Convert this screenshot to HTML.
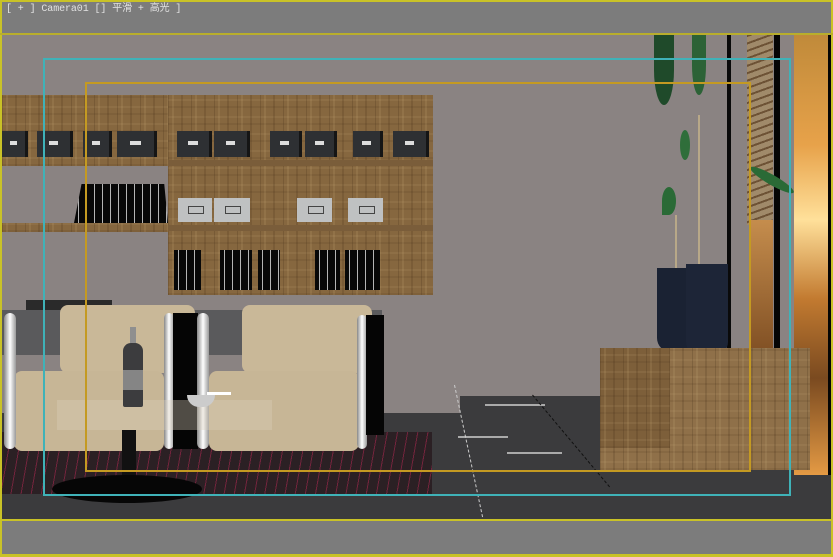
<!DOCTYPE html>
<html><head><meta charset="utf-8"><style>
*{margin:0;padding:0;box-sizing:border-box}
body{width:833px;height:557px;overflow:hidden;background:#7c7c7c;position:relative;font-family:"Liberation Mono","Noto Sans CJK SC",monospace}
div{position:absolute}
.wood{background-color:#86673f;background-image:repeating-linear-gradient(90deg,rgba(60,40,20,.2) 0 1px,transparent 1px 4px,rgba(210,180,130,.14) 4px 6px,transparent 6px 13px,rgba(50,30,10,.15) 13px 15px,transparent 15px 23px),repeating-linear-gradient(0deg,rgba(80,55,30,.15) 0 2px,transparent 2px 7px,rgba(200,170,120,.12) 7px 9px,transparent 9px 17px)}
.bx{background:#2e3033;height:26px;border-right:3px solid #151515}
.bx:after{content:"";position:absolute;left:35%;top:10px;width:30%;height:4px;background:#ddd}
.gb{background:#bfc1c2;height:24px;top:198px}
.gb:after{content:"";position:absolute;left:30%;top:8px;width:40%;height:6px;border:1px solid #444}
.bk{background:#080808;background-image:repeating-linear-gradient(90deg,transparent 0 4px,rgba(255,255,255,.7) 4px 5px,transparent 5px 8px)}
</style></head><body>
<div style="left:0;top:0;width:833px;height:557px;border:2px solid #c9c227;border-bottom:3px solid #c9c227"></div>
<div style="left:6px;top:3px;color:#e2e2e2;font-size:10px;line-height:13px;white-space:pre;letter-spacing:-0.1px">[ + ] Camera01 [] 平滑 + 高光 ]</div>
<div style="left:2px;top:35px;width:829px;height:485px;background:#8a8382;overflow:hidden">
  <div style="left:0;top:378px;width:829px;height:110px;background:#3b3b3d"></div>
  <div style="left:458px;top:361px;width:371px;height:20px;background:#3b3b3d"></div>
  <div style="left:0;top:397px;width:430px;height:62px;background:#2b2024;background-image:repeating-linear-gradient(100deg,transparent 0 9px,rgba(200,40,90,.45) 9px 10px)"></div>
  <div style="left:483px;top:369px;width:60px;height:2px;background:#aaa"></div>
  <div style="left:456px;top:401px;width:50px;height:2px;background:#aaa"></div>
  <div style="left:505px;top:417px;width:55px;height:2px;background:#aaa"></div>
  <div style="left:452px;top:350px;width:1px;height:135px;border-left:1px dashed #ccc;transform:rotate(-12deg);transform-origin:top"></div>
  <div style="left:530px;top:360px;width:1px;height:120px;border-left:1px dashed #111;transform:rotate(-40deg);transform-origin:top"></div>
  <div style="left:792px;top:0;width:37px;height:440px;background:linear-gradient(180deg,#c08a3a,#e7a24a 25%,#ffe09a 42%,#c27a30 60%,#7a4a20 78%,#e49a44)"></div>
  <div style="left:725px;top:0;width:4px;height:320px;background:#0a0a0a"></div>
  <div style="left:745px;top:0;width:26px;height:190px;background:#a08a6a;background-image:repeating-linear-gradient(160deg,#6d5235 0 2px,transparent 2px 7px)"></div>
  <div style="left:749px;top:185px;width:22px;height:145px;background:linear-gradient(180deg,#c58d4d,#7a4a20)"></div>
  <div style="left:772px;top:0;width:6px;height:330px;background:#050505"></div>
  <div style="left:826px;top:0;width:3px;height:440px;background:#050505"></div>
  <div style="left:652px;top:0;width:20px;height:70px;background:#1f4a2a;border-radius:0 0 50% 50%"></div>
  <div style="left:690px;top:0;width:14px;height:60px;background:#2c6236;border-radius:0 0 50% 50%"></div>
  <div style="left:678px;top:95px;width:10px;height:30px;background:#2f6e3a;border-radius:50%"></div>
  <div style="left:660px;top:152px;width:14px;height:28px;background:#2a6a36;border-radius:50% 50% 50% 0"></div>
  <div style="left:745px;top:140px;width:50px;height:10px;background:#2a6a36;border-radius:50%;transform:rotate(30deg)"></div>
  <div style="left:673px;top:180px;width:2px;height:55px;background:#b8a888"></div>
  <div style="left:696px;top:80px;width:2px;height:150px;background:#b8a888"></div>
  <div style="left:655px;top:233px;width:36px;height:84px;background:#1a2233;border-radius:0 0 14px 14px"></div>
  <div style="left:684px;top:229px;width:42px;height:92px;background:#1d2537;border-radius:0 0 14px 14px"></div>
  <div class="wood" style="left:598px;top:313px;width:210px;height:122px;background-color:#8f7049"></div>
  <div class="wood" style="left:598px;top:313px;width:70px;height:100px;background-color:#7d5f3a"></div>
  <div class="wood" style="left:0;top:60px;width:431px;height:71px"></div>
  <div class="wood" style="left:166px;top:60px;width:265px;height:200px"></div>
  <div class="wood" style="left:0;top:188px;width:166px;height:9px"></div>
  <div style="left:166px;top:125px;width:265px;height:6px;background:#7a5d3a"></div>
  <div style="left:166px;top:190px;width:265px;height:6px;background:#7a5d3a"></div>
  <div class="bx" style="left:0;top:96px;width:26px"></div>
  <div class="bx" style="left:35px;top:96px;width:36px"></div>
  <div class="bx" style="left:81px;top:96px;width:29px"></div>
  <div class="bx" style="left:115px;top:96px;width:40px"></div>
  <div class="bx" style="left:175px;top:96px;width:35px"></div>
  <div class="bx" style="left:212px;top:96px;width:36px"></div>
  <div class="bx" style="left:268px;top:96px;width:32px"></div>
  <div class="bx" style="left:303px;top:96px;width:32px"></div>
  <div class="bx" style="left:351px;top:96px;width:30px"></div>
  <div class="bx" style="left:391px;top:96px;width:36px"></div>
  <div class="gb" style="left:176px;top:163px;width:34px"></div>
  <div class="gb" style="left:212px;top:163px;width:36px"></div>
  <div class="gb" style="left:295px;top:163px;width:35px"></div>
  <div class="gb" style="left:346px;top:163px;width:35px"></div>
  <div class="bk" style="left:72px;top:149px;width:94px;height:39px;clip-path:polygon(8% 0,96% 0,100% 100%,0 100%)"></div>
  <div class="bk" style="left:172px;top:215px;width:27px;height:40px"></div>
  <div class="bk" style="left:218px;top:215px;width:32px;height:40px"></div>
  <div class="bk" style="left:256px;top:215px;width:22px;height:40px"></div>
  <div class="bk" style="left:313px;top:215px;width:25px;height:40px"></div>
  <div class="bk" style="left:343px;top:215px;width:35px;height:40px"></div>
  <div style="left:24px;top:265px;width:86px;height:12px;background:#2a2a2a"></div>
  <div style="left:0;top:275px;width:380px;height:45px;background:#5a5a5c"></div>
  <div style="left:58px;top:270px;width:135px;height:68px;background:#c9b898;border-radius:8px"></div>
  <div style="left:12px;top:336px;width:150px;height:80px;background:#c7b696;border-radius:8px"></div>
  <div style="left:2px;top:278px;width:12px;height:136px;background:linear-gradient(90deg,#888,#fff,#999);border-radius:6px"></div>
  <div style="left:162px;top:278px;width:10px;height:136px;background:linear-gradient(90deg,#888,#fff,#999);border-radius:5px"></div>
  <div style="left:171px;top:278px;width:25px;height:136px;background:#050505"></div>
  <div style="left:240px;top:270px;width:130px;height:68px;background:#c9b898;border-radius:8px"></div>
  <div style="left:207px;top:336px;width:150px;height:80px;background:#c7b696;border-radius:8px"></div>
  <div style="left:195px;top:278px;width:12px;height:136px;background:linear-gradient(90deg,#888,#fff,#999);border-radius:6px"></div>
  <div style="left:355px;top:280px;width:10px;height:134px;background:linear-gradient(90deg,#888,#fff,#999);border-radius:5px"></div>
  <div style="left:364px;top:280px;width:18px;height:120px;background:#050505"></div>
  <div style="left:55px;top:365px;width:215px;height:30px;background:rgba(220,210,190,.35)"></div>
  <div style="left:120px;top:395px;width:14px;height:55px;background:#111"></div>
  <div style="left:50px;top:440px;width:150px;height:28px;background:#060606;border-radius:50%"></div>
  <div style="left:128px;top:292px;width:6px;height:18px;background:#8f8f8f"></div>
  <div style="left:121px;top:308px;width:20px;height:64px;background:#3c3c3e;border-radius:8px 8px 2px 2px"></div>
  <div style="left:121px;top:335px;width:20px;height:20px;background:#858585"></div>
  <div style="left:185px;top:360px;width:28px;height:12px;background:#ccc;border-radius:0 0 14px 14px"></div>
  <div style="left:205px;top:357px;width:24px;height:3px;background:#fff"></div>
</div>
<div style="left:0;top:33px;width:833px;height:2px;background:#b9ae2c"></div>
<div style="left:0;top:519px;width:833px;height:2px;background:#c9c227"></div>
<div style="left:43px;top:58px;width:748px;height:438px;border:2px solid #3fb2b8"></div>
<div style="left:85px;top:82px;width:666px;height:390px;border:2px solid #c49a22"></div>
</body></html>
